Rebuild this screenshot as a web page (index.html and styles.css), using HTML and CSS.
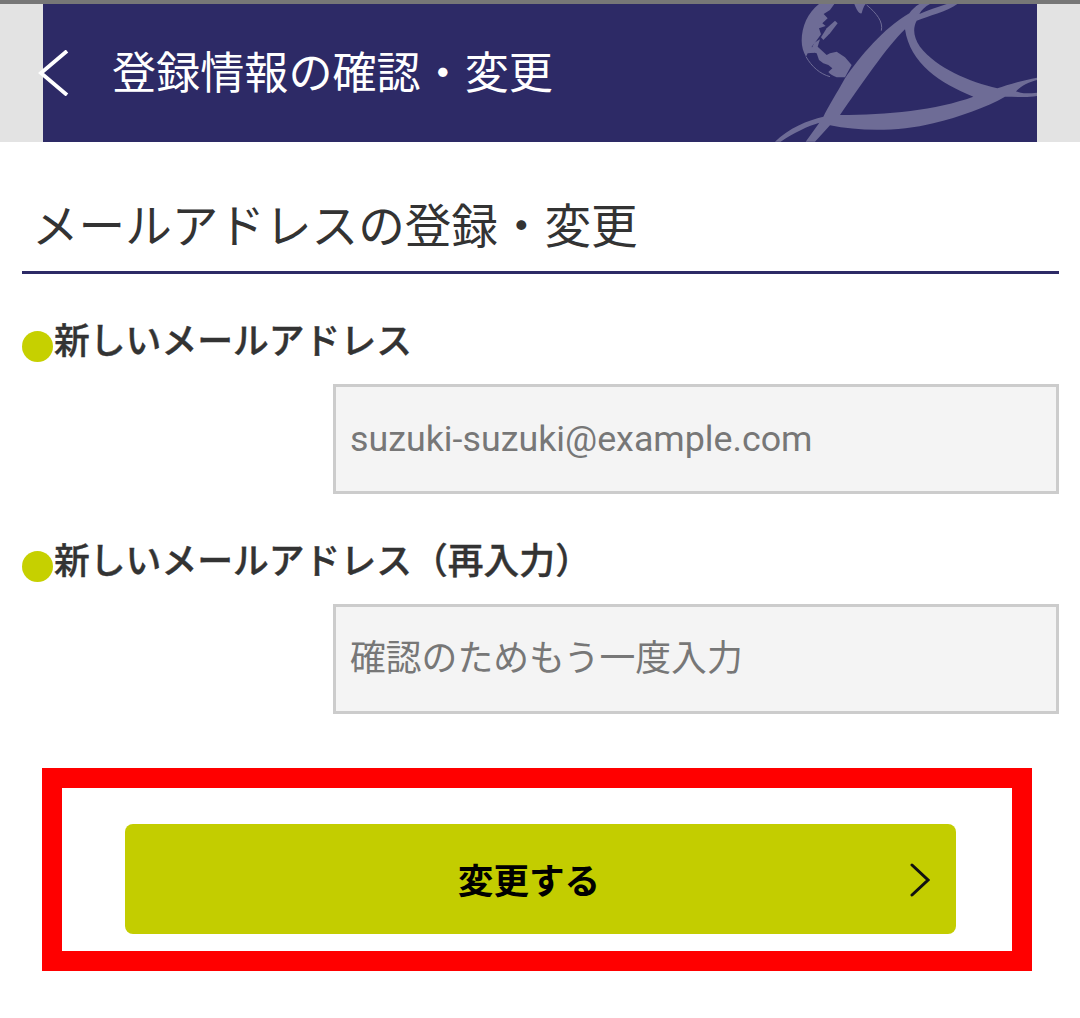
FILE: index.html
```html
<!DOCTYPE html>
<html lang="ja">
<head>
	<meta charset="utf-8">
	<meta name="viewport" content="width=device-width, initial-scale=1">
	<title>メールアドレスの登録・変更</title>
	<link rel="stylesheet" href="styles.css">
</head>
<body>
<div class="statusline"></div>
<header class="top">
	<div class="top-inner">
		<svg class="back" viewBox="0 0 32 46" width="32" height="46" aria-hidden="true">
			<path d="M29 1 L3 23 L29 45" fill="none" stroke="#fff" stroke-width="3.8"/>
		</svg>
		<h1 class="top-title">登録情報の確認・変更</h1>
		<svg class="logo" viewBox="0 12 831 414" width="277" height="138" aria-hidden="true">
			<!-- globe, left side filled, coast cut out -->
			<g transform="translate(105 0)">
				<path class="ink" d="M72 12 C38 38 20 80 20 122 C20 140 25 155 33 170 L38 160 L58 158 L50 140 L62 125 L78 103 L72 85 L92 78 L82 70 L98 55 L86 42 L105 30 L118 12 Z"/>
				<path class="ink" d="M58 128 L75 118 L68 140 L95 165 L105 160 L125 155 L150 172 L170 195 L150 232 L125 232 C112 226 105 222 100 216 L112 205 L100 195 L85 190 L72 180 L65 160 L45 155 Z"/>
				<path class="ink" d="M95 85 L120 62 L128 70 L105 100 L85 120 L78 112 Z"/>
				<path class="ink" d="M178 12 C185 30 192 42 200 40 C203 30 205 20 212 12 Z"/>
				<path class="line" d="M33 170 C50 200 75 222 105 230"/>
				<path class="line" d="M215 15 C245 40 265 65 259 92"/>
			</g>
			<path class="ink" fill-rule="evenodd" d="M448 40 C370 85 300 170 255 235 C230 280 205 320 190 350 C145 360 85 385 45 425 L62 425 C100 398 145 378 178 368 L137 425 L165 425 L210 376 C300 395 420 395 520 370 C600 350 680 322 735 290 C770 290 800 294 831 288 L831 278 C800 282 780 280 768 274 C785 256 810 245 831 240 L831 233 C790 240 740 255 712 265 C630 245 530 205 480 140 C460 110 458 85 470 62 C505 48 560 35 592 12 L560 12 C530 22 505 30 478 42 C485 30 495 20 510 12 L478 12 C465 20 455 30 448 40 Z M435 88 C380 140 300 260 240 345 C380 345 530 330 640 290 C540 250 450 190 435 88 Z"/>
		</svg>
	</div>
</header>

<main class="content">
	<h2 class="section-title">メールアドレスの登録・変更</h2>

	<div class="field">
		<div class="field-label"><span class="dot"></span>新しいメールアドレス</div>
		<input class="field-input" type="text" placeholder="suzuki-suzuki@example.com">
	</div>

	<div class="field">
		<div class="field-label"><span class="dot"></span>新しいメールアドレス（再入力）</div>
		<input class="field-input" type="text" placeholder="確認のためもう一度入力">
	</div>

	<div class="highlight">
		<button class="submit" type="button">
			変更する
			<svg class="submit-arrow" viewBox="0 0 20 34" width="20" height="34" aria-hidden="true">
				<path d="M2 2 L18 17 L2 32" fill="none" stroke="#111" stroke-width="3" stroke-linecap="round"/>
			</svg>
		</button>
	</div>
</main>
</body>
</html>
```

FILE: styles.css
```css
* {
	box-sizing: border-box;
}
body {
	margin: 0;
	background: #fff;
	font-family: Roboto, "Noto Sans CJK JP", sans-serif;
	color: #333;
}
.statusline {
	height: 4px;
	background: #777;
}
.top {
	background: #e3e3e3;
	padding: 0 43px;
}
.top-inner {
	position: relative;
	display: flex;
	align-items: center;
	height: 138px;
	background: #2d2a66;
	padding: 3px 0 0 69px;
}
.back {
	position: absolute;
	left: -5px;
	top: 46px;
}
.top-title {
	margin: 0;
	font-size: 44.1px;
	font-weight: 400;
	line-height: 1;
	color: #fff;
}
.logo {
	position: absolute;
	right: 0;
	top: 0;
}
.ink {
	fill: #6e6c96;
}
.line {
	fill: none;
	stroke: #6e6c96;
	stroke-width: 3;
}
.content {
	padding: 0 21px 0 22px;
}
.section-title {
	margin: 0;
	height: 132px;
	padding: 57px 0 0 10px;
	border-bottom: 3px solid #2d2a66;
	font-size: 46.6px;
	font-weight: 400;
	line-height: 56px;
	color: #333;
}
.field {
	display: flex;
	flex-direction: column;
	height: 220px;
}
.field-label {
	display: flex;
	align-items: flex-end;
	margin-top: 45px;
	height: 46px;
	font-size: 35.8px;
	font-weight: 500;
	-webkit-text-stroke: 0.4px #333;
	line-height: 46px;
	white-space: nowrap;
}
.dot {
	flex: none;
	width: 31px;
	height: 31px;
	margin: 0 1px 3px 0;
	border-radius: 50%;
	background: #c6d000;
	filter: blur(0.5px);
}
.field-input {
	align-self: flex-end;
	width: 726px;
	height: 110px;
	margin-top: 19px;
	padding: 0 14px;
	border: 3px solid #ccc;
	border-radius: 0;
	outline: 0;
	background: #f4f4f4;
	font-family: inherit;
	font-size: 35.8px;
}
.field-input::placeholder {
	color: #777;
	opacity: 1;
}
.highlight {
	width: 990px;
	height: 203px;
	margin: 54px 0 0 20px;
	padding: 36px 0 0 63px;
	border: 20px solid #f00;
}
.submit {
	position: relative;
	display: block;
	width: 831px;
	height: 110px;
	padding: 0 23px 2px 0;
	border: 0;
	border-radius: 8px;
	background: #c3cd00;
	color: #000;
	font-family: inherit;
	font-size: 35.6px;
	font-weight: 700;
}
.submit-arrow {
	position: absolute;
	right: 26px;
	top: 39px;
}
```
